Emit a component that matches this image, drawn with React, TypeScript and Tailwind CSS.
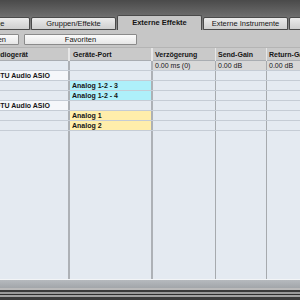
import React from 'react'

type Row = { dev?: string; port?: string; tone?: 'cyan' | 'yellow'; delay?: string; send?: string; ret?: string; head?: boolean }

const rows: Row[] = [
  { delay: '0.00 ms (0)', send: '0.00 dB', ret: '0.00 dB' },
  { dev: 'MOTU Audio ASIO', head: true },
  { port: 'Analog 1-2 - 3', tone: 'cyan' },
  { port: 'Analog 1-2 - 4', tone: 'cyan' },
  { dev: 'MOTU Audio ASIO', head: true },
  { port: 'Analog 1', tone: 'yellow' },
  { port: 'Analog 2', tone: 'yellow' },
]

const tabs = ['Ausgänge', 'Gruppen/Effekte', 'Externe Effekte', 'Externe Instrumente', 'Studio']

export default function App() {
  return (
    <div className="w-[300px] h-[300px] overflow-hidden flex flex-col bg-[#c6c6c6] text-[#151515] font-['Liberation_Sans',Arial,sans-serif]">
      {/* Tabs over dark title gradient */}
      <div className="h-[30px] shrink-0 flex items-end gap-px pl-0 bg-gradient-to-b from-[#4a4a4a] via-[#6a6a6a] to-[#959595] -ml-[55px]">
        {tabs.map(t =>
          t === 'Externe Effekte' ? (
            <div key={t} className="w-[85px] h-[15px] shrink-0 flex items-center justify-center bg-[#c6c6c6] border border-b-0 border-[#4a4a4a] rounded-t-[2px] text-[7.5px] font-bold leading-none">
              {t}
            </div>
          ) : (
            <div key={t} className="w-[85px] h-[13px] shrink-0 flex items-center justify-center bg-gradient-to-b from-[#ececec] to-[#cfcfcf] border border-[#4a4a4a] rounded-t-[2px] text-[7.5px] leading-none">
              {t}
            </div>
          )
        )}
      </div>

      {/* Toolbar */}
      <div className="h-[17px] shrink-0 flex items-start gap-[5px] pt-[4px] bg-[#c6c6c6]">
        <div className="w-[100px] h-[11px] -ml-[81px] shrink-0 flex items-center justify-end pr-[12px] bg-gradient-to-b from-[#fbfbfb] to-[#e6e6e6] border border-[#8a8a8a] rounded-[1px] text-[7.5px] leading-none">
          Effekt hinzufügen
        </div>
        <div className="w-[113px] h-[11px] shrink-0 flex items-center justify-center bg-gradient-to-b from-[#fbfbfb] to-[#e6e6e6] border border-[#8a8a8a] rounded-[1px] text-[7.5px] leading-none">
          Favoriten
        </div>
      </div>

      {/* Table */}
      <div className="flex-1 flex flex-col -ml-[14px] w-[314px] bg-[#e4eaf1]">
        <div className="h-[14px] shrink-0 grid grid-cols-[84px_83px_63px_51px_1fr] bg-[#c9c9c9] border-t border-[#b4b4b4] border-b border-b-[#a9adb2] text-[7px] font-bold leading-[13px]">
          <div className="pl-[5px] border-r-2 border-[#e6e6e6]">Audiogerät</div>
          <div className="pl-[3px] border-r-2 border-[#e6e6e6]">Geräte-Port</div>
          <div className="pl-[2px] border-r border-[#e6e6e6]">Verzögerung</div>
          <div className="pl-[2px] border-r border-[#e6e6e6]">Send-Gain</div>
          <div className="pl-[2px] whitespace-nowrap">Return-Gain</div>
        </div>

        {rows.map((r, i) => (
          <div key={i} className="h-[10px] shrink-0 grid grid-cols-[84px_83px_63px_51px_1fr] border-b border-[#c5ccd5] text-[7px] font-bold leading-[9px]">
            <div className={`pl-[3px] border-r-2 border-[#adb1b6] whitespace-nowrap ${r.head ? 'bg-[#f5f7fa]' : ''}`}>{r.dev}</div>
            <div className={`pl-[2px] border-r-2 border-[#adb1b6] ${r.tone === 'cyan' ? 'bg-[#aef0fa]' : r.tone === 'yellow' ? 'bg-[#ffeeab]' : ''}`}>{r.port}</div>
            <div className={`pl-[2px] border-r border-[#a6aaae] font-normal ${r.delay ? 'bg-[#d8d8d8]' : ''}`}>{r.delay}</div>
            <div className={`pl-[2px] border-r border-[#a6aaae] font-normal ${r.send ? 'bg-[#d8d8d8]' : ''}`}>{r.send}</div>
            <div className={`pl-[2px] font-normal ${r.ret ? 'bg-[#d8d8d8]' : ''}`}>{r.ret}</div>
          </div>
        ))}

        {/* empty remainder of table */}
        <div className="flex-1 grid grid-cols-[84px_83px_63px_51px_1fr] border-b border-[#f2f4f6]">
          <div className="border-r-2 border-[#adb1b6]" />
          <div className="border-r-2 border-[#adb1b6]" />
          <div className="border-r border-[#a6aaae]" />
          <div className="border-r border-[#a6aaae]" />
          <div />
        </div>
      </div>

      {/* Bottom frame */}
      <div className="h-[20px] shrink-0 flex flex-col">
        <div className="h-[8px] bg-gradient-to-b from-[#b6babe] to-[#a2a6aa]" />
        <div className="h-[2px] bg-[#bababa]" />
        <div className="h-[2px] bg-[#3a3a3a]" />
        <div className="h-[2px] bg-[#9a9a9a]" />
        <div className="h-px bg-[#2e2e2e]" />
        <div className="h-[2px] bg-[#a2a2a2]" />
        <div className="h-[3px] bg-[#3c3c3c]" />
      </div>
    </div>
  )
}
